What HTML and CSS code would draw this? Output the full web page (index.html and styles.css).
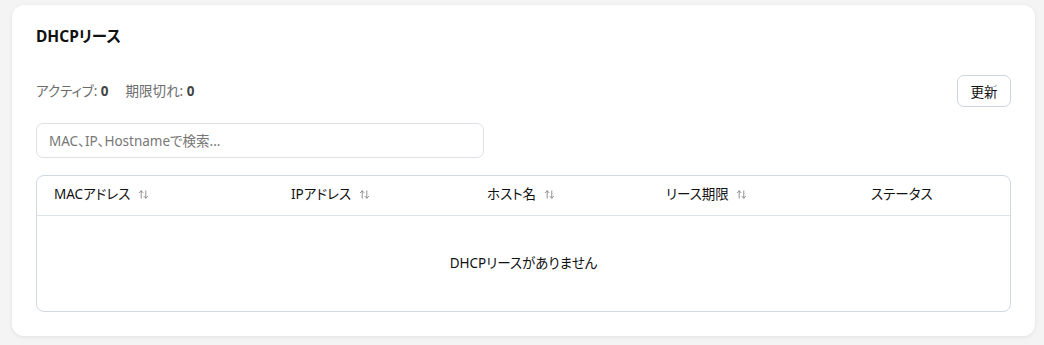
FILE: index.html
```html
<!DOCTYPE html>
<html lang="ja">
<head>
    <meta charset="UTF-8">
    <title>DHCPリース</title>
    <link rel="stylesheet" href="styles.css">
</head>
<body>
    <div class="card">
        <h2 class="card-title">DHCPリース</h2>
        <div class="toolbar">
            <div class="stats">
                <span>アクティブ: <b>0</b></span>
                <span>期限切れ: <b>0</b></span>
            </div>
            <button class="refresh-button">更新</button>
        </div>
        <input class="search-input" type="text" placeholder="MAC、IP、Hostnameで検索...">
        <div class="table-wrap">
            <table class="lease-table">
                <thead>
                    <tr>
                        <th class="col-mac">MACアドレス <svg class="sort-icon" viewBox="0 0 24 24"><path d="m21 16-4 4-4-4M17 20V4M3 8l4-4 4 4M7 4v16"/></svg></th>
                        <th class="col-ip">IPアドレス <svg class="sort-icon" viewBox="0 0 24 24"><path d="m21 16-4 4-4-4M17 20V4M3 8l4-4 4 4M7 4v16"/></svg></th>
                        <th class="col-host">ホスト名 <svg class="sort-icon" viewBox="0 0 24 24"><path d="m21 16-4 4-4-4M17 20V4M3 8l4-4 4 4M7 4v16"/></svg></th>
                        <th class="col-expire">リース期限 <svg class="sort-icon" viewBox="0 0 24 24"><path d="m21 16-4 4-4-4M17 20V4M3 8l4-4 4 4M7 4v16"/></svg></th>
                        <th>ステータス</th>
                    </tr>
                </thead>
                <tbody>
                    <tr>
                        <td class="empty" colspan="5">DHCPリースがありません</td>
                    </tr>
                </tbody>
            </table>
        </div>
    </div>
</body>
</html>
```

FILE: styles.css
```css
body {
    font-family: "Noto Sans", "Noto Sans CJK JP", sans-serif;
    font-feature-settings: "palt";
    margin: 0;
    padding: 5px 9px 8px 12px;
    background-color: #f4f4f5;
    color: #111;
}
.card {
    background-color: white;
    border-radius: 12px;
    box-shadow: 0 1px 4px rgba(0, 0, 0, 0.08);
    padding: 21px 24px 24px 24px;
}
.card-title {
    margin: 0 0 29px;
    font-size: 15.5px;
    font-weight: bold;
    line-height: 20px;
}
.toolbar {
    display: flex;
    align-items: center;
    justify-content: space-between;
    margin-bottom: 16px;
}
.stats {
    display: flex;
    gap: 17px;
    padding-bottom: 2px;
    font-size: 13.5px;
    color: #6b6b6b;
}
.stats b {
    color: #444;
}
.refresh-button {
    font-family: inherit;
    font-feature-settings: inherit;
    font-size: 13.5px;
    color: #111;
    background: white;
    border: 1px solid #cbd5e1;
    border-radius: 7px;
    width: 54px;
    height: 32px;
    padding: 0;
}
.search-input {
    display: block;
    box-sizing: border-box;
    width: 448px;
    height: 35px;
    padding: 0 12px;
    font-family: inherit;
    font-feature-settings: inherit;
    font-size: 13.5px;
    border: 1px solid #dde1e6;
    border-radius: 7px;
    margin-bottom: 17px;
    outline: none;
}
.search-input::placeholder {
    color: #777;
}
.table-wrap {
    border: 1px solid #cfd8e3;
    border-radius: 8px;
    overflow: hidden;
}
.lease-table {
    width: 100%;
    border-collapse: collapse;
    table-layout: fixed;
    font-size: 13.5px;
}
.lease-table th {
    text-align: left;
    font-weight: normal;
    height: 39px;
    padding: 0 17px 4px;
    border-bottom: 1px solid #dde3ea;
    white-space: nowrap;
}
.col-mac { width: 237px; }
.col-ip { width: 196px; }
.col-host { width: 179px; }
.col-expire { width: 205px; }
.lease-table th,
.lease-table td {
    box-sizing: border-box;
}
.sort-icon {
    width: 11px;
    height: 11px;
    margin-left: 4px;
    vertical-align: -1px;
    fill: none;
    stroke: #888;
    stroke-width: 2;
    stroke-linecap: round;
    stroke-linejoin: round;
}
.empty {
    text-align: center;
    height: 96px;
    padding: 0 0 2px;
    color: #111;
}
```
